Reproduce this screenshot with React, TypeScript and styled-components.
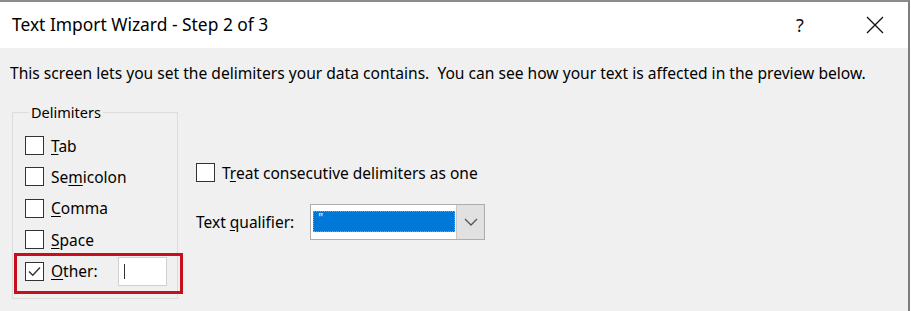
import styled, { createGlobalStyle } from 'styled-components'

const GlobalStyle = createGlobalStyle`
	html, body {
		margin: 0;
		padding: 0;
		background: #ffffff;
		overflow: hidden;
	}
	* {
		box-sizing: border-box;
	}
`

const FONT = `"Noto Sans", "Open Sans", "Liberation Sans", sans-serif`

const Window = styled.div`
	width: 910px;
	height: 311px;
	margin-right: 1px;
	border-top: 2px solid #8c8c8c;
	border-right: 2px solid #7d7d7d;
	background: #f0f0f0;
	font-family: ${FONT};
	color: #000;
	display: flex;
	flex-direction: column;
`

const TitleBar = styled.div`
	height: 46px;
	background: #ffffff;
	display: flex;
	align-items: center;
	padding-left: 12px;
`

const Title = styled.div`
	flex: 1;
	font-size: 17.4px;
	padding-bottom: 2px;
`

const TitleButton = styled.div<{ width: string }>`
	width: ${props => props.width};
	height: 46px;
	display: flex;
	align-items: center;
	justify-content: center;
	font-size: 18px;
	color: #111;
`

const Body = styled.div`
	flex: 1;
	padding: 15px 10px 0 10px;
`

const Description = styled.div`
	font-size: 15.6px;
	line-height: 20px;
	white-space: nowrap;
`

const Columns = styled.div`
	display: flex;
	margin-top: 22px;
`

const GroupBox = styled.fieldset`
	width: 166px;
	height: 194px;
	margin: 0 0 0 2px;
	padding: 17px 0 0 12px;
	border: 1px solid #dcdcdc;
	display: flex;
	flex-direction: column;
	gap: 12.4px;
`

const Legend = styled.legend`
	font-size: 14.5px;
	padding: 0 2px;
	margin-left: 4px;
	line-height: 14px;
`

const Row = styled.label`
	display: flex;
	align-items: center;
	gap: 7px;
	font-size: 15.5px;
	height: 19px;
	white-space: nowrap;
	position: relative;
`

const Box = styled.span`
	width: 19px;
	height: 19px;
	border: 1px solid #333333;
	background: #ffffff;
	display: inline-flex;
	align-items: center;
	justify-content: center;
	flex-shrink: 0;
`

const Key = styled.span`
	text-decoration: underline;
	text-underline-offset: 2px;
`

const Highlight = styled.div`
	position: absolute;
	left: -11px;
	top: -9px;
	width: 169px;
	height: 41px;
	border: 3px solid #c50f1f;
	pointer-events: none;
`

const OtherInput = styled.div`
	width: 49px;
	height: 29px;
	margin-left: 13px;
	background: #ffffff;
	border: 1px solid #d0d0d0;
	display: flex;
	align-items: center;
	padding-left: 5px;
`

const Caret = styled.span`
	width: 1px;
	height: 15px;
	background: #333;
`

const RightColumn = styled.div`
	margin-left: 18px;
	padding-top: 58px;
	display: flex;
	flex-direction: column;
	gap: 22px;
`

const QualifierRow = styled.div`
	display: flex;
	align-items: center;
	font-size: 15.5px;
	gap: 16px;
`

const Combo = styled.div`
	width: 175px;
	height: 36px;
	border: 1px solid #adadad;
	background: #ffffff;
	display: flex;
	align-items: stretch;
`

const ComboValue = styled.div`
	flex: 1;
	padding: 6px 1px 7px 2px;
	display: flex;
`

const Selection = styled.div`
	flex: 1;
	background: #0078d7;
	border: 1px dotted #7a9fd0;
	color: #ffffff;
	font-size: 12px;
	line-height: 12px;
	padding-left: 4px;
`

const DropButton = styled.div`
	width: 28px;
	background: #e1e1e1;
	border-left: 1px solid #c8c8c8;
	display: flex;
	align-items: center;
	justify-content: center;
`

const CheckBox = ({ checked }: { checked?: boolean }) => (
	<Box>
		{checked && (
			<svg width="15" height="15" viewBox="0 0 15 15">
				<path d="M2 7.5 L5.8 11.3 L13 3.5" fill="none" stroke="#333" strokeWidth="1.4" />
			</svg>
		)}
	</Box>
)

export default function App() {
	return (
		<>
			<GlobalStyle />
			<Window>
				<TitleBar>
					<Title>Text Import Wizard - Step 2 of 3</Title>
					<TitleButton width="94px">?</TitleButton>
					<TitleButton width="56px">
						<svg width="18" height="18" viewBox="0 0 18 18">
							<path d="M1 1 L17 17 M17 1 L1 17" stroke="#111" strokeWidth="1.3" />
						</svg>
					</TitleButton>
					<TitleButton width="5px" />
				</TitleBar>
				<Body>
					<Description>
						This screen lets you set the delimiters your data contains.&nbsp; You can see how your text is
						affected in the preview below.
					</Description>
					<Columns>
						<GroupBox>
							<Legend>Delimiters</Legend>
							<Row>
								<CheckBox />
								<span><Key>T</Key>ab</span>
							</Row>
							<Row>
								<CheckBox />
								<span>Se<Key>m</Key>icolon</span>
							</Row>
							<Row>
								<CheckBox />
								<span><Key>C</Key>omma</span>
							</Row>
							<Row>
								<CheckBox />
								<span><Key>S</Key>pace</span>
							</Row>
							<Row>
								<CheckBox checked />
								<span><Key>O</Key>ther:</span>
								<OtherInput>
									<Caret />
								</OtherInput>
								<Highlight />
							</Row>
						</GroupBox>
						<RightColumn>
							<Row>
								<CheckBox />
								<span>T<Key>r</Key>eat consecutive delimiters as one</span>
							</Row>
							<QualifierRow>
								<span>Text <Key>q</Key>ualifier:</span>
								<Combo>
									<ComboValue>
										<Selection>"</Selection>
									</ComboValue>
									<DropButton>
										<svg width="14" height="8" viewBox="0 0 14 8">
											<path d="M1 1 L7 7 L13 1" fill="none" stroke="#555" strokeWidth="1.3" />
										</svg>
									</DropButton>
								</Combo>
							</QualifierRow>
						</RightColumn>
					</Columns>
				</Body>
			</Window>
		</>
	)
}
